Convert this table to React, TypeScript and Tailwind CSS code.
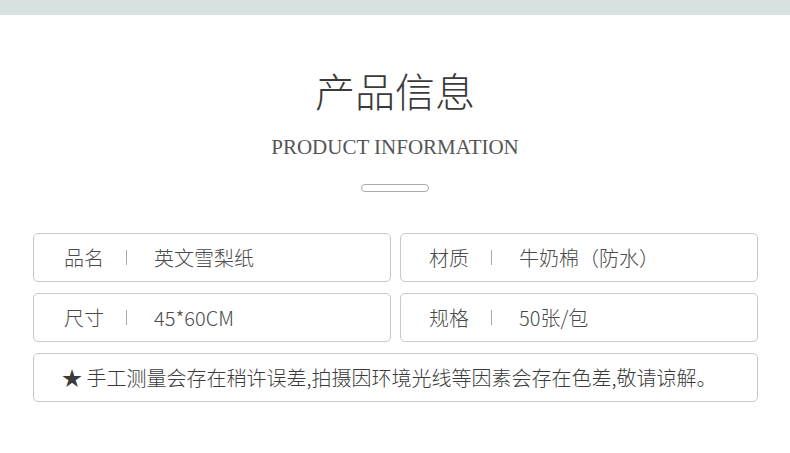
import React from "react";

const cjk = { fontFamily: '"Noto Sans CJK SC", "Noto Sans", sans-serif' };

function Cell({ label, value, pl }: { label: string; value: string; pl: string }) {
  return (
    <div className={`flex h-[49px] items-center rounded-[5px] border border-[#c8c8c8] ${pl} text-[20px] font-light leading-none text-[#4a4a4a]`}>
      <span>{label}</span>
      <span className="ml-[22px] mr-[27px] h-[15px] w-px bg-[#aaa]" />
      <span>{value}</span>
    </div>
  );
}

export default function App() {
  return (
    <div className="h-[453px] w-[790px] bg-white" style={cjk}>
      <div className="h-[15px] bg-[#d8e0e2]" />
      <div className="mt-[55px] text-center text-[40px] font-light leading-[40px] text-[#3a3a3a]">产品信息</div>
      <div
        className="mt-[27px] text-center text-[21px] leading-[20px] text-[#555]"
        style={{ fontFamily: '"Liberation Serif", serif' }}
      >
        PRODUCT INFORMATION
      </div>
      <div className="mt-[27px] flex justify-center">
        <div className="h-[8px] w-[68px] rounded-full border border-[#aaa]" />
      </div>
      <div className="mt-[41px] grid grid-cols-2 gap-x-[9px] gap-y-[11px] pl-[33px] pr-[32px]">
        <Cell label="品名" value="英文雪梨纸" pl="pl-[30px]" />
        <Cell label="材质" value="牛奶棉（防水）" pl="pl-[28px]" />
        <Cell label="尺寸" value="45*60CM" pl="pl-[30px]" />
        <Cell label="规格" value="50张/包" pl="pl-[28px]" />
        <div className="col-span-2 flex h-[49px] items-center rounded-[5px] border border-[#c8c8c8] pl-[28px] text-[20px] font-light leading-none text-[#3a3a3a]">
          ★ 手工测量会存在稍许误差,拍摄因环境光线等因素会存在色差,敬请谅解。
        </div>
      </div>
    </div>
  );
}
